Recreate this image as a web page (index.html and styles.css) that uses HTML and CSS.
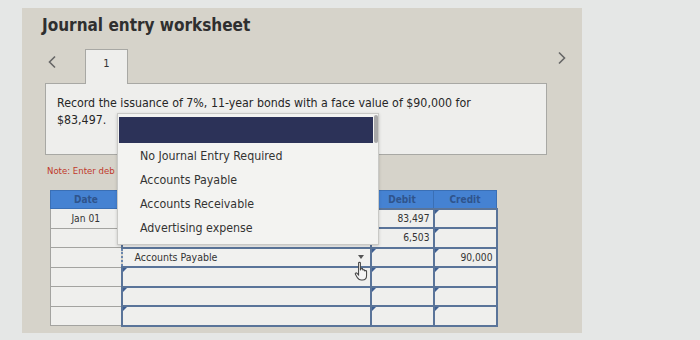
FILE: index.html
```html
<!DOCTYPE html>
<html>
<head>
<meta charset="utf-8">
<link rel="stylesheet" href="styles.css">
</head>
<body>
<div class="screen">
  <div class="panel">
    <h1 class="title">Journal entry worksheet</h1>
    <div class="nav">
      <span class="arrow prev"><svg width="10" height="14" viewBox="0 0 10 14"><path d="M8 1.5 L2.5 7 L8 12.5" fill="none" stroke="#666" stroke-width="1.6"/></svg></span>
      <div class="tab">1</div>
      <span class="arrow next"><svg width="10" height="14" viewBox="0 0 10 14"><path d="M2 1.5 L7.5 7 L2 12.5" fill="none" stroke="#666" stroke-width="1.6"/></svg></span>
    </div>
    <div class="question">Record the issuance of 7%, 11-year bonds with a face value of $90,000 for<br>$83,497.</div>
    <div class="work">
      <p class="note">Note: Enter debits before credits.</p>
      <table class="grid">
        <thead>
          <tr><th class="c-date">Date</th><th class="c-acct"></th><th class="c-num">Debit</th><th class="c-num">Credit</th></tr>
        </thead>
        <tbody>
          <tr><td class="c-date">Jan 01</td><td class="c-acct mark"></td><td class="c-num mark">83,497</td><td class="c-num mark"></td></tr>
          <tr><td class="c-date"></td><td class="c-acct mark"></td><td class="c-num mark">6,503</td><td class="c-num mark"></td></tr>
          <tr><td class="c-date"></td><td class="c-acct selected"><span class="sel-text">Accounts Payable</span><span class="caret"></span></td><td class="c-num mark"></td><td class="c-num mark">90,000</td></tr>
          <tr><td class="c-date"></td><td class="c-acct mark"></td><td class="c-num mark"></td><td class="c-num mark"></td></tr>
          <tr><td class="c-date"></td><td class="c-acct mark"></td><td class="c-num mark"></td><td class="c-num mark"></td></tr>
          <tr><td class="c-date"></td><td class="c-acct mark"></td><td class="c-num mark"></td><td class="c-num mark"></td></tr>
        </tbody>
      </table>
      <div class="popup">
        <div class="popup-head"><span class="scroll"></span></div>
        <ul class="options">
          <li>No Journal Entry Required</li>
          <li>Accounts Payable</li>
          <li>Accounts Receivable</li>
          <li>Advertising expense</li>
        </ul>
      </div>
      <svg class="cursor" width="16" height="21" viewBox="0 0 14 18"><path d="M4 1.5 C4 0.7 5.6 0.7 5.6 1.5 L5.6 8 L6 6.8 C6.2 6 7.6 6 7.6 6.9 L7.6 8 C7.8 7.2 9.3 7.2 9.3 8.1 L9.3 8.8 C9.5 8 11 8 11 8.9 L11 12.5 C11 14.8 9.8 16.5 7.4 16.5 L6.3 16.5 C4.8 16.5 3.9 15.8 3.1 14.6 L1.2 11.4 C0.7 10.6 1.8 9.8 2.5 10.5 L4 12 Z" fill="#f4f4f4" stroke="#444" stroke-width="0.9"/></svg>
    </div>
  </div>
</div>
</body>
</html>
```

FILE: styles.css
```css
* { box-sizing: border-box; }
html, body { margin: 0; padding: 0; }
body {
  width: 700px;
  height: 340px;
  overflow: hidden;
  background: #e5e7e6;
  font-family: "DejaVu Sans Condensed", "DejaVu Sans", sans-serif;
  color: #333;
}
.screen {
  padding-top: 8px;
  padding-left: 22px;
  height: 340px;
}
.panel {
  width: 560px;
  height: 325px;
  background: #d6d3ca;
  padding: 7px 0 0 20px;
}
.title {
  margin: 0;
  font-size: 17px;
  line-height: 21px;
  font-weight: bold;
  color: #2f2f2f;
}
.nav {
  display: flex;
  align-items: flex-start;
  margin-top: 13px;
  width: 525px;
  height: 35px;
  position: relative;
  z-index: 2;
}
.arrow { display: flex; }
.prev { margin: 6px 0 0 5px; }
.next { margin: 2px 0 0 auto; }
.tab {
  margin-left: 28px;
  width: 43px;
  height: 35px;
  background: #eeeeec;
  border: 1px solid #a8a8a4;
  border-bottom: none;
  font-size: 11px;
  text-align: center;
  line-height: 28px;
}
.question {
  margin: -1px 0 0 3px;
  width: 502px;
  height: 72px;
  background: #eeeeec;
  border: 1px solid #a8a8a4;
  padding: 11px 0 0 11px;
  font-size: 12.3px;
  line-height: 17px;
  color: #262626;
}
.work {
  position: relative;
  margin-left: 5px;
}
.note {
  margin: 9px 0 0 0;
  width: 68px;
  overflow: hidden;
  white-space: nowrap;
  font-size: 9.5px;
  line-height: 14px;
  color: #c0392b;
}
.grid {
  margin: 12px 0 0 3px;
  border-collapse: collapse;
  table-layout: fixed;
  width: 447px;
}
.grid th {
  height: 18px;
  padding: 0;
  background: #4582d2;
  border: 1px solid #3a6fb5;
  font-size: 10px;
  font-weight: bold;
  color: #2f548c;
  text-align: center;
}
.grid td {
  height: 19.5px;
  padding: 0 2px;
  background: #efefed;
  font-size: 10.2px;
  position: relative;
}
.grid td.c-date {
  width: 71px;
  border: 1px solid #a3a3a0;
  text-align: center;
}
.grid th.c-date { width: 71px; }
.grid .c-acct { width: 249px; }
.grid .c-num { width: 63px; }
.grid td.c-acct, .grid td.c-num {
  border: 2px solid #5a7499;
}
.grid td.c-num { text-align: right; padding-right: 3px; }
.grid td.mark::before {
  content: "";
  position: absolute;
  left: 0;
  top: 0;
  border-left: 4px solid #3e5f92;
  border-bottom: 4px solid transparent;
}
.grid td.selected {
  border: 2px dotted #6a86ad;
  background: #f1f1ef;
  padding-left: 12px;
  font-size: 10.5px;
  color: #333;
}
.caret {
  position: absolute;
  right: 6px;
  top: 6px;
  border-left: 3px solid transparent;
  border-right: 3px solid transparent;
  border-top: 4px solid #555;
}
.popup {
  position: absolute;
  left: 70px;
  top: -51px;
  width: 262px;
  height: 132px;
  background: #f3f3f1;
  border: 1px solid #c9c9c6;
  box-shadow: 0 1px 3px rgba(0,0,0,0.18);
  padding: 3px 0 0 1px;
}
.popup-head {
  height: 26px;
  margin-right: 5px;
  background: #2c3258;
  position: relative;
}
.scroll {
  position: absolute;
  right: -5px;
  top: -2px;
  width: 4px;
  height: 28px;
  background: #a9a9a9;
  border-radius: 2px;
}
.options {
  list-style: none;
  margin: 0;
  padding: 1px 0 0 21px;
}
.options li {
  font-size: 12.3px;
  line-height: 24px;
  color: #333;
}
.cursor {
  position: absolute;
  left: 307px;
  top: 97px;
}
```
